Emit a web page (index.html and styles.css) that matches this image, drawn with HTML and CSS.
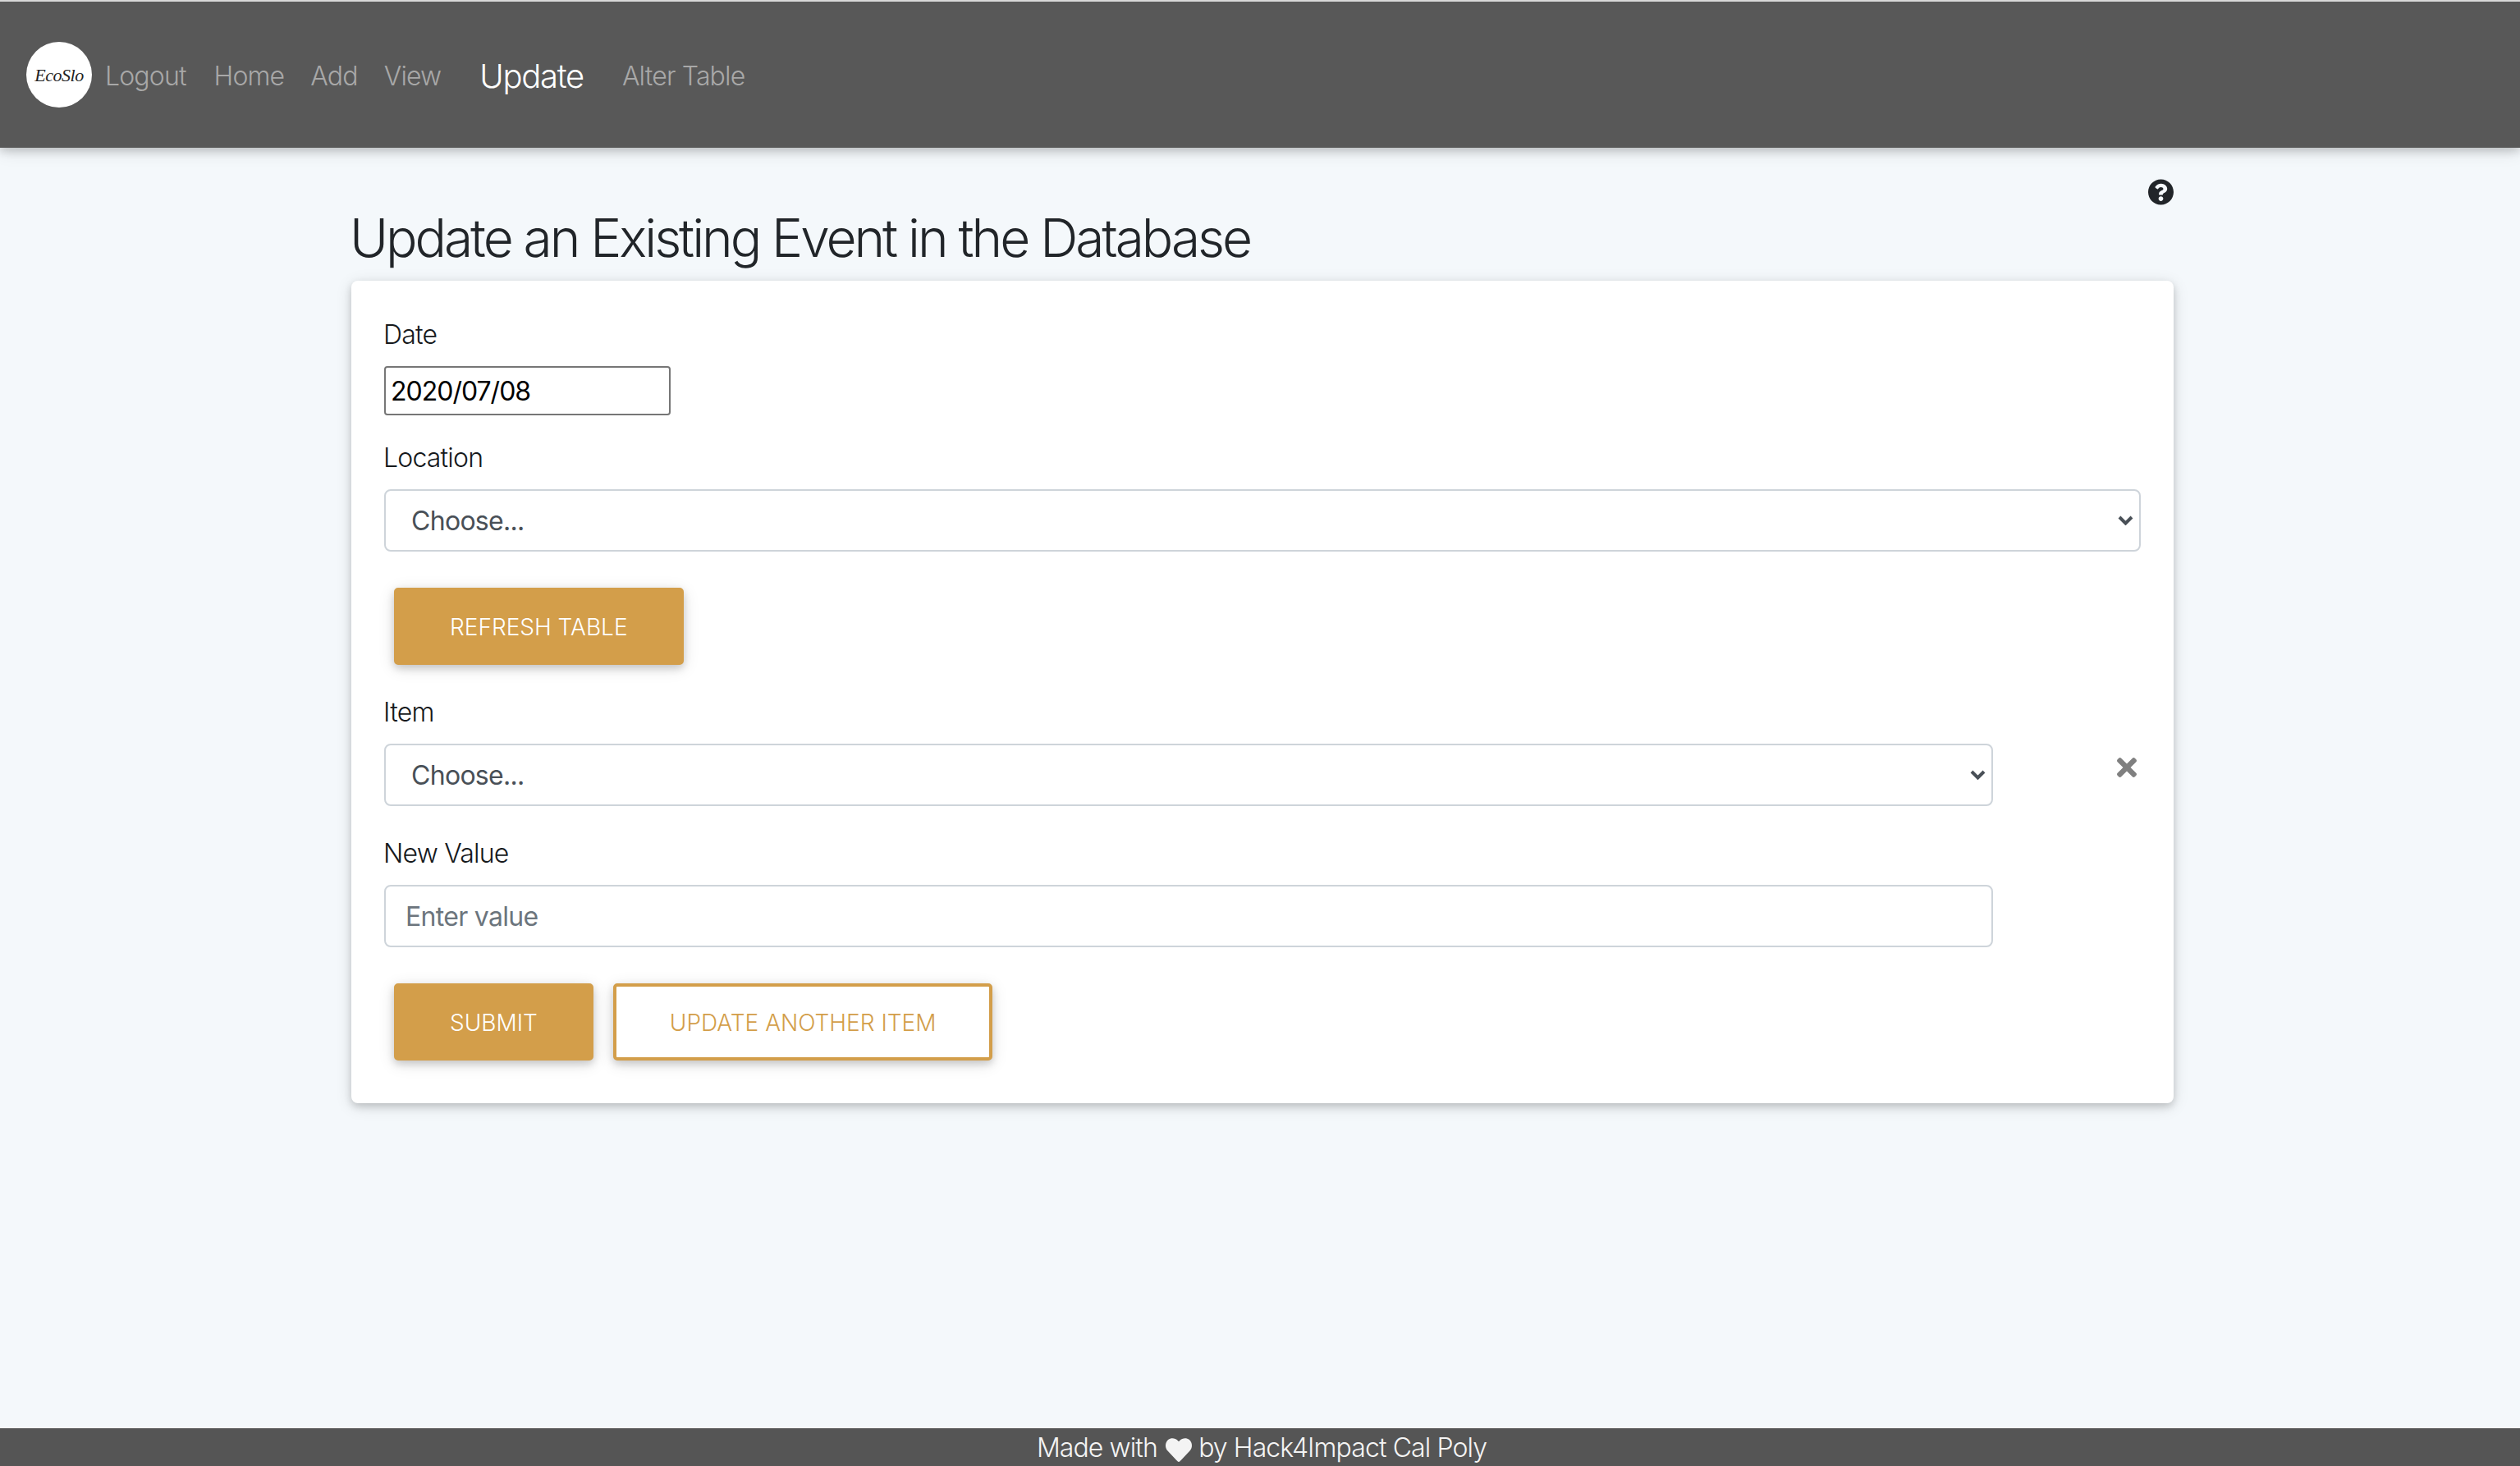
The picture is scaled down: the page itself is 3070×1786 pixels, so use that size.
FILE: index.html
```html
<html>
<head>
<meta charset="UTF-8">
<meta name="viewport" content="width=device-width, initial-scale=1.0">
<title>Update</title>
<link rel="stylesheet" href="styles.css">
</head>
<body>
	<nav class="navbar">
		<div class="logo"><span>EcoSlo</span></div>
		<a href="#" class="nav-link nav-first">Logout</a>
		<a href="#" class="nav-link">Home</a>
		<a href="#" class="nav-link">Add</a>
		<a href="#" class="nav-link">View</a>
		<a href="#" class="nav-link active">Update</a>
		<a href="#" class="nav-link">Alter Table</a>
	</nav>
	<main class="content">
		<div class="help-row">
			<svg class="help-icon" viewBox="8 8 496 496"><path d="M504 256c0 136.997-111.043 248-248 248S8 392.997 8 256C8 119.083 119.043 8 256 8s248 111.083 248 248zM262.655 90c-54.497 0-89.255 22.957-116.549 63.758-3.536 5.286-2.353 12.415 2.715 16.258l34.699 26.31c5.205 3.947 12.621 3.008 16.665-2.122 17.864-22.658 30.113-35.797 57.303-35.797 20.429 0 45.698 13.148 45.698 32.958 0 14.976-12.363 22.667-32.534 33.976C247.128 238.528 216 254.941 216 296v4c0 6.627 5.373 12 12 12h56c6.627 0 12-5.373 12-12v-1.333c0-28.462 83.186-29.647 83.186-106.667 0-58.002-60.165-102-116.531-102zM256 338c-25.365 0-46 20.635-46 46 0 25.364 20.635 46 46 46s46-20.636 46-46c0-25.365-20.635-46-46-46z"/></svg>
		</div>
		<h2 class="page-title">Update an Existing Event in the Database</h2>
		<form class="card">
			<div class="date-group">
				<label class="field-label">Date</label>
				<input class="date-input" type="text" value="2020/07/08">
			</div>
			<div class="form-group">
				<label class="field-label">Location</label>
				<select class="form-control"><option>Choose...</option></select>
			</div>
			<div class="btn-row">
				<button type="button" class="btn btn-fill">Refresh Table</button>
			</div>
			<div class="item-row">
				<div class="item-fields">
					<div class="form-group">
						<label class="field-label">Item</label>
						<select class="form-control"><option>Choose...</option></select>
					</div>
					<div class="form-group">
						<label class="field-label">New Value</label>
						<input class="form-control value-input" type="text" placeholder="Enter value">
					</div>
				</div>
				<svg class="remove-icon" viewBox="0 80 352 352"><path d="M242.72 256l100.07-100.07c12.28-12.28 12.28-32.19 0-44.48l-22.24-22.24c-12.28-12.28-32.19-12.28-44.48 0L176 189.28 75.93 89.21c-12.28-12.28-32.19-12.28-44.48 0L9.21 111.45c-12.28 12.28-12.28 32.19 0 44.48L109.28 256 9.21 356.07c-12.28 12.28-12.28 32.19 0 44.48l22.24 22.24c12.28 12.28 32.2 12.28 44.48 0L176 322.72l100.07 100.07c12.28 12.28 32.2 12.28 44.48 0l22.24-22.24c12.28-12.28 12.28-32.19 0-44.48L242.72 256z"/></svg>
			</div>
			<div class="btn-row">
				<button type="button" class="btn btn-fill">Submit</button>
				<button type="button" class="btn btn-outline">Update another item</button>
			</div>
		</form>
	</main>
	<footer class="footer">
		Made with
		<svg class="heart" viewBox="0 30 512 450" preserveAspectRatio="none"><path d="M462.3 62.6C407.5 15.9 326 24.3 275.7 76.2L256 96.5l-19.7-20.3C186.1 24.3 104.5 15.9 49.7 62.6c-62.8 53.6-66.1 149.8-9.9 207.9l193.5 199.8c12.5 12.9 32.8 12.9 45.3 0l193.5-199.8c56.3-58.1 53-154.3-9.8-207.9z"/></svg>
		by Hack4Impact Cal Poly
	</footer>
</body>
</html>
```

FILE: styles.css
```css
* {box-sizing:border-box;}
html, body {margin:0;padding:0;height:100%;}
body {display:flex;flex-direction:column;background:#f4f8fb;color:#212529;font-family:Inter,"Liberation Sans",sans-serif;font-size:32px;font-weight:300;line-height:1.5;}

/* navbar */
.navbar {flex:none;display:flex;align-items:center;height:180px;padding:0 0 0 32px;background:#585858;border-top:2px solid #d8d8d8;box-shadow:0 4px 10px rgba(0,0,0,.16),0 4px 20px rgba(0,0,0,.12);position:relative;}
.logo {display:flex;align-items:center;justify-content:center;width:80px;height:80px;border-radius:50%;background:#fff;color:#222;font-family:"Liberation Serif",serif;font-style:italic;font-size:22px;letter-spacing:-.5px;}
.nav-link {padding:3px 16px 0 16px;color:#a8a8a8;letter-spacing:-.85px;text-decoration:none;white-space:nowrap;}
.nav-first {margin-right:2px;}
.nav-link.active {margin:0 15px;color:#fff;font-size:40px;letter-spacing:-1.3px;}

/* main */
.content {flex:1;width:2220px;margin-left:428px;padding-top:38px;}
.help-row {display:flex;justify-content:flex-end;height:32px;}
.help-icon {width:31px;height:32px;fill:#212529;}
.page-title {margin:0 0 13px -2px;padding-top:2px;font-size:64px;font-weight:300;line-height:1.2;letter-spacing:-3.05px;}
.card {padding:40px;background:#fff;border-radius:8px;box-shadow:0 4px 10px rgba(0,0,0,.16),0 4px 20px rgba(0,0,0,.12);}

/* form */
.field-label {display:block;margin:0 0 14px -1px;padding-top:2px;font-weight:300;letter-spacing:-.8px;color:#16191c;}
.date-group {margin-bottom:26px;}
.form-group {margin-bottom:32px;}
.date-input {display:block;width:349px;height:60px;padding:2px 6px 0 6px;border:2px solid #767676;border-radius:4px;background:#fff;color:#000;font:inherit;font-weight:400;letter-spacing:-1px;}
.form-control {display:block;width:100%;height:76px;padding:2px 24px 0 24px;border:2px solid #ced4da;border-radius:8px;background:#fff;color:#495057;font:inherit;font-weight:400;letter-spacing:-.7px;outline:none;}
select.form-control {appearance:none;padding:2px 32px 0 31px;background-image:url("data:image/svg+xml,%3Csvg xmlns='http://www.w3.org/2000/svg' width='19' height='13'%3E%3Cpath d='M2 3l7.500 7.500L17 3' fill='none' stroke='%23495057' stroke-width='4'/%3E%3C/svg%3E");background-repeat:no-repeat;background-position:right 7px center;}
.value-input::placeholder {color:#6c757d;opacity:1;}
.item-row {display:flex;align-items:flex-start;margin-top:20px;}
.item-fields {flex:none;width:1960px;}
.remove-icon {flex:none;width:24px;height:24px;margin:81px 0 0 151px;fill:#808080;}

/* buttons */
.btn-row {display:flex;gap:24px;padding:12px;}
.btn {height:94px;padding:2px 66px 0 66px;border:2px solid #d39e4a;border-radius:5px;font-family:inherit;font-size:28px;font-weight:300;text-transform:uppercase;white-space:nowrap;box-shadow:0 4px 10px rgba(0,0,0,.16),0 4px 20px rgba(0,0,0,.12);}
.btn-fill {background:#d39e4a;color:#fff;}
.btn-outline {padding:2px 65px 0 65px;border-width:4px;background:#fff;color:#d39e4a;}

/* footer */
.footer {flex:none;height:46px;padding-left:4px;background:#555;color:#f4f4f4;line-height:48px;letter-spacing:-.9px;text-align:center;white-space:nowrap;}
.heart {display:inline-block;width:32px;height:29px;margin:0 0 0 2px;fill:#f4f4f4;vertical-align:-6px;}
```
